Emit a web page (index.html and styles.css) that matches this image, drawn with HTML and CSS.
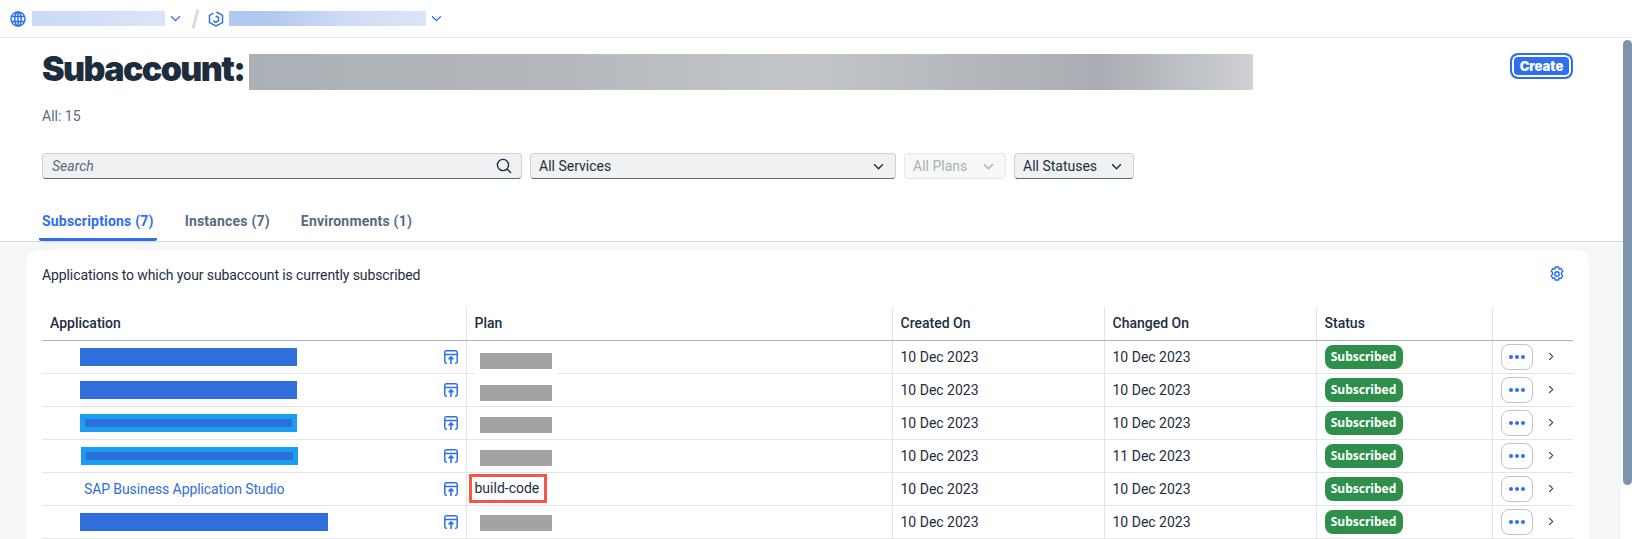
FILE: index.html
```html
<!DOCTYPE html>
<html>
<head>
  <meta charset="UTF-8">
  <title>Subaccount Service Marketplace</title>
  <link rel="stylesheet" href="styles.css">
</head>
<body>
<div class="topbar">
  <svg class="icon-16" viewBox="0 0 16 16" fill="none" stroke="#2f6fed" stroke-width="1.5"><circle cx="8" cy="8" r="7"/><ellipse cx="8" cy="8" rx="3.2" ry="7"/><path d="M8 1v14M1.4 5.6h13.2M1.4 10.4h13.2"/></svg>
  <span class="blur blur-global"></span>
  <svg class="chev" viewBox="0 0 12 8" fill="none" stroke="#2f6fed" stroke-width="1.5"><path d="M1 1.5l5 5 5-5"/></svg>
  <span class="slash"></span>
  <svg class="icon-16" viewBox="0 0 16 16" fill="none" stroke="#2f6fed" stroke-width="1.5"><path d="M8.5 1L14.5 4.4v7.2L8 15l-6.5-3.4V4.4L5.5 2.2"/><path d="M5.2 9.8l2.6 1.6 2.7-1.5V6.6L7.8 5"/></svg>
  <span class="blur blur-sub"></span>
  <svg class="chev" viewBox="0 0 12 8" fill="none" stroke="#2f6fed" stroke-width="1.5"><path d="M1 1.5l5 5 5-5"/></svg>
</div>

<div class="page">
  <div class="head">
    <div class="title-row">
      <h1>Subaccount:</h1>
      <span class="title-blur"></span>
      <button class="create">Create</button>
    </div>
    <div class="count">All: 15</div>
    <div class="filters">
      <div class="field search">
        <span class="placeholder">Search</span>
        <svg class="icon-search" viewBox="0 0 16 16" fill="none" stroke="#1d2d3e" stroke-width="1.4"><circle cx="7" cy="7" r="5.6"/><path d="M11 11l4 4"/></svg>
      </div>
      <div class="field services"><span>All Services</span><svg class="chev-dark" viewBox="0 0 12 8" fill="none" stroke="#1d2d3e" stroke-width="1.6"><path d="M1 1.5l5 5 5-5"/></svg></div>
      <div class="field plans disabled"><span>All Plans</span><svg class="chev-dark" viewBox="0 0 12 8" fill="none" stroke="#a9b0b7" stroke-width="1.6"><path d="M1 1.5l5 5 5-5"/></svg></div>
      <div class="field statuses"><span>All Statuses</span><svg class="chev-dark" viewBox="0 0 12 8" fill="none" stroke="#1d2d3e" stroke-width="1.6"><path d="M1 1.5l5 5 5-5"/></svg></div>
    </div>
    <div class="tabs">
      <a class="tab active">Subscriptions (7)</a>
      <a class="tab">Instances (7)</a>
      <a class="tab">Environments (1)</a>
    </div>
  </div>

  <div class="content">
    <div class="card">
      <div class="card-head">
        <span class="card-text">Applications to which your subaccount is currently subscribed</span>
        <svg class="icon-16" viewBox="0 0 16 16" fill="none" stroke="#2f6fed" stroke-width="1.4" stroke-linejoin="round"><path d="M6.4 1h3.2l.6 2 2-.5 1.6 2.8-1.4 1.5 0 1.4 1.4 1.5-1.6 2.8-2-.5-.6 2H6.4l-.6-2-2 .5-1.6-2.8 1.4-1.5 0-1.4-1.4-1.5 1.6-2.8 2 .5z"/><circle cx="8" cy="8" r="2.2"/></svg>
      </div>
      <table>
        <colgroup>
          <col class="c-app"><col class="c-plan"><col class="c-date"><col class="c-date"><col class="c-status"><col class="c-act">
        </colgroup>
        <thead>
          <tr><th>Application</th><th>Plan</th><th>Created On</th><th>Changed On</th><th>Status</th><th></th></tr>
        </thead>
        <tbody id="rows"></tbody>
      </table>
    </div>
  </div>
</div>
<div class="scrollthumb"></div>

<script>
  var rows = [
    { app: "solid", w: 217, x: 0, plan: "mask", drop: 8, changed: "10 Dec 2023" },
    { app: "solid", w: 217, x: 0, plan: "mask", drop: 6, changed: "10 Dec 2023" },
    { app: "framed", w: 217, x: 0, plan: "mask", drop: 4, changed: "10 Dec 2023" },
    { app: "framed", w: 217, x: 1, plan: "mask", drop: 4, changed: "11 Dec 2023" },
    { app: "text", plan: "build-code", changed: "10 Dec 2023" },
    { app: "solid", w: 248, x: 0, plan: "mask", drop: 2, changed: "10 Dec 2023" }
  ];
  var html = "";
  rows.forEach(function(r, i) {
    var app;
    if (r.app == "text") app = '<a class="app-link">SAP Business Application Studio</a>';
    else app = '<span class="redact ' + r.app + '" style="width:' + r.w + 'px;margin-left:' + r.x + 'px"></span>';
    var plan = r.plan == "mask"
      ? '<span class="plan-mask' + (i == 0 ? ' first' : '') + '" style="margin-top:' + r.drop + 'px"></span>'
      : '<span class="plan-mark">' + r.plan + '</span>';
    html += '<tr><td><div class="app-cell">' + app +
      '<svg class="go" viewBox="0 0 14 14" fill="none" stroke="#2f6fed" stroke-width="1.5"><path d="M3 13.2H2.2A1.5 1.5 0 0 1 .8 11.7V2.3A1.5 1.5 0 0 1 2.2.8h9.6a1.5 1.5 0 0 1 1.4 1.5v9.4a1.5 1.5 0 0 1-1.4 1.5H11M.8 4.4h12.4"/><path d="M7 14V7.2M4.6 9.4L7 7l2.4 2.4" stroke-width="1.6"/></svg></div></td>' +
      '<td>' + plan + '</td>' +
      '<td>10 Dec 2023</td><td>' + r.changed + '</td>' +
      '<td><span class="badge">Subscribed</span></td>' +
      '<td><div class="act-cell"><button class="more"><i></i><i></i><i></i></button>' +
      '<svg class="row-arrow" viewBox="0 0 7 10" fill="none" stroke="#1d2d3e" stroke-width="1.2"><path d="M1.5 1l4 4-4 4"/></svg></div></td></tr>';
  });
  document.getElementById("rows").innerHTML = html;
</script>
</body>
</html>
```

FILE: styles.css
```css
* { box-sizing: border-box; }
html, body { height: 539px; overflow: hidden; }
body { margin: 0; font-family: Roboto, Arial, sans-serif; font-size: 14px; color: #1d2d3e; background: #fff; }

.topbar { height: 38px; display: flex; align-items: center; padding-left: 10px; border-bottom: 1px solid #e5e5e5; }
.icon-16 { width: 16px; height: 16px; flex: none; }
.blur { height: 15px; display: block; }
.blur-global { width: 133px; margin-left: 6px; background: linear-gradient(90deg, #c9daf7, #dbe5f7); }
.blur-sub { width: 197px; margin-left: 5px; background: linear-gradient(90deg, #b0c9f0 20%, #cfdcf5 60%, #dbe5f7); }
.chev { width: 11px; height: 7px; margin-left: 5px; }
.slash { width: 3px; height: 20px; margin: 0 11px 0 13px; background: #dcdcdc; transform: rotate(15deg); }

.head { padding: 0 59px 0 42px; height: 204px; border-bottom: 1px solid #d9d9d9; }
.title-row { display: flex; align-items: flex-start; padding-top: 16px; }
h1 { margin: 0; width: 207px; flex: none; font-size: 34px; line-height: 30px; font-weight: 900; font-family: Inter, sans-serif; letter-spacing: -1.6px; color: #1d2d3e; white-space: nowrap; }
.title-blur { width: 1004px; height: 36px; background: linear-gradient(90deg, #abb0b6, #b4b8bc 30%, #c2c6c8 55%, #a9adb3 85%, #cfd1d3); }
.create { margin-left: auto; margin-top: -1px; width: 63px; height: 26px; border: 2px solid #2f6fed; box-shadow: inset 0 0 0 2px #fff; border-radius: 8px; background: #2f6fed; color: #fff; font-family: Inter, sans-serif; font-size: 13px; font-weight: 900; padding: 0; }
.count { margin-top: 16px; color: #556b82; line-height: 20px; }

.filters { display: flex; gap: 8px; margin-top: 27px; }
.field { height: 26px; display: flex; align-items: center; justify-content: space-between; background: #eff1f2; border: 1px solid #ccd0d5; border-bottom-color: #556b82; border-radius: 4px; padding: 0 8px; }
.search { width: 480px; padding: 0 9px; }
.placeholder { font-style: italic; color: #556b82; }
.icon-search { width: 16px; height: 16px; }
.services { width: 366px; }
.plans { width: 102px; }
.statuses { width: 120px; }
.disabled { background: #f7f8f8; border-color: #e6e8ea; color: #a9b0b7; }
.chev-dark { width: 11px; height: 7px; margin-right: 3px; }

.tabs { display: flex; gap: 25px; margin-top: 23px; margin-left: -3px; }
.tab { padding: 0 3px; height: 39px; line-height: 38px; font-weight: 700; letter-spacing: 0.2px; color: #556b82; }
.tab.active { color: #2f6fed; border-bottom: 3px solid #2f6fed; border-radius: 0 0 2px 2px; }

.content { background: #f5f6f7; margin-right: 11px; padding: 8px 32px 0 26px; height: 297px; }
.card { background: #fff; border-radius: 12px 12px 0 0; height: 100%; padding: 0 16px; }
.card-head { height: 57px; display: flex; align-items: flex-start; justify-content: space-between; padding: 16px 8px 0 0; line-height: 18px; }
.card-text { letter-spacing: -0.1px; }

table { width: 1531px; table-layout: fixed; border-collapse: collapse; }
.c-app { width: 424px; }
.c-plan { width: 426px; }
.c-date { width: 212px; }
.c-status { width: 176px; }
.c-act { width: 81px; }
th, td { height: 33px; padding: 0 8px; text-align: left; border-right: 1px solid #e5e5e5; white-space: nowrap; }
th:last-child, td:last-child { border-right: 0; }
th { font-weight: 500; border-bottom: 1px solid #a8b2bd; }
td { border-bottom: 1px solid #e5e5e5; }

.app-cell { display: flex; align-items: center; justify-content: space-between; padding-left: 30px; padding-right: 0; }
.redact { display: block; height: 18px; background: #2f6fdb; }
.redact.framed { background: #1a9ff0; padding: 5px; }
.redact.framed::after { content: ""; display: block; height: 8px; background: #2f6fdb; }
.app-link { color: #2f6fdb; margin-left: 4px; letter-spacing: -0.1px; }
.go { width: 14px; height: 14px; flex: none; }

.plan-mask { display: block; width: 72px; height: 16px; margin-left: 5px; background: #a3a3a3; }
.plan-mask.first { box-shadow: 0 0 0 5px #fff; position: relative; z-index: 1; }
.plan-mark { display: inline-block; vertical-align: middle; width: 78px; margin-left: -6px; padding: 0 0 0 3px; height: 29px; line-height: 23px; border: 3px solid #f4574a; }

.badge { display: inline-block; height: 24px; line-height: 23px; width: 78px; text-align: center; border-radius: 8px; background: #2e8f4a; color: #fff; font-family: "Noto Sans", sans-serif; font-size: 12px; font-weight: 700; vertical-align: middle; }
.act-cell { display: flex; align-items: center; }
.more { width: 32px; height: 26px; display: flex; align-items: center; justify-content: center; gap: 2px; border: 1px solid #bcc3ca; border-radius: 8px; background: #fff; padding: 0; }
.more i { width: 4px; height: 4px; border-radius: 50%; background: #2f6fed; }
.row-arrow { width: 6px; height: 9px; margin-left: 15px; }

.scrollthumb { position: absolute; left: 1623px; top: 40px; width: 9px; height: 445px; background: #7e93ac; border-radius: 5px; }
```
